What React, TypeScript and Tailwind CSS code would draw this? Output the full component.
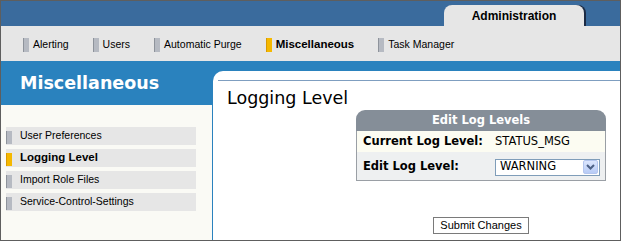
const navItems = [
  { label: "Alerting", active: false },
  { label: "Users", active: false },
  { label: "Automatic Purge", active: false },
  { label: "Miscellaneous", active: true },
  { label: "Task Manager", active: false },
];

const sideItems = [
  { label: "User Preferences", active: false },
  { label: "Logging Level", active: true },
  { label: "Import Role Files", active: false },
  { label: "Service-Control-Settings", active: false },
];

function Marker({ active, className }: { active: boolean; className: string }) {
  return (
    <span
      className={
        active
          ? `${className} w-[6px] shrink-0 bg-[#f5b800] border-l border-[#d99a00]`
          : `${className} w-[6px] shrink-0 bg-[#b6bac2] border-l border-[#8e939b]`
      }
    />
  );
}

export default function App() {
  return (
    <div className="w-[621px] h-[241px] border border-[#5e5e5e] flex flex-col overflow-hidden bg-white font-['Liberation_Sans',Arial,sans-serif]">
      {/* top bar */}
      <div className="h-[25px] bg-[#3a6b9d] flex justify-end items-end pr-[36px]">
        <div className="w-[140px] h-[21px] bg-[#e6e6e6] rounded-t-[8px] shadow-[2px_0_0_#1b2a43] flex items-center justify-center text-[12px] font-bold text-black">
          Administration
        </div>
      </div>

      {/* nav */}
      <div className="h-[35px] bg-[#e6e6e6] flex items-center gap-[24px] pl-[22px] pt-[3px] text-[10.5px] text-black">
        {navItems.map((item) => (
          <div key={item.label} className="flex items-center gap-[4px]">
            <Marker active={item.active} className="h-[14px]" />
            <span className={item.active ? "font-bold text-[11.5px]" : ""}>{item.label}</span>
          </div>
        ))}
      </div>

      {/* main */}
      <div className="flex flex-1">
        <div className="w-[211px] flex flex-col">
          <div className="h-[44px] bg-[#2a82be] flex items-center pl-[19px] text-white font-bold text-[17.5px] font-['DejaVu_Sans',Verdana,sans-serif]">
            Miscellaneous
          </div>
          <div className="flex-1 bg-[#fafaf5] pt-[22px] pl-[5px] flex flex-col gap-[4px]">
            {sideItems.map((item) => (
              <div key={item.label} className="w-[190px] h-[18px] bg-[#e6e6e6] flex items-end text-[10.5px] text-black">
                <Marker active={item.active} className="h-[13px] mb-[1px]" />
                <span className={item.active ? "self-center ml-[8px] font-bold text-[11.5px]" : "self-center ml-[8px]"}>
                  {item.label}
                </span>
              </div>
            ))}
          </div>
        </div>

        <div className="w-[408px] bg-[#2a82be] pt-[10px] pl-[1px] flex">
          <div className="flex-1 bg-white rounded-tl-[10px] flex flex-col">
            <div className="mt-[9px] ml-[5px] h-px bg-[#7f9ec0]" />
            <div className="mt-[7px] ml-[14px] leading-[20px] text-[17.5px] text-black font-['DejaVu_Sans',Verdana,sans-serif]">
              Logging Level
            </div>

            <div className="mt-[2px] ml-[143px] w-[250px] flex flex-col font-['DejaVu_Sans',Verdana,sans-serif] text-[11.5px] text-black">
              <div className="h-[21px] bg-[#858e98] rounded-t-[9px] flex items-center justify-center text-white font-bold">
                Edit Log Levels
              </div>
              <div className="h-[21px] bg-[#fcfcf2] border-x border-[#9a9fa5] flex items-center">
                <span className="w-[138px] pl-[6px] font-bold">Current Log Level:</span>
                <span>STATUS_MSG</span>
              </div>
              <div className="h-[29px] bg-[#eef0f1] border-x border-b border-[#9a9fa5] flex items-center pt-[2px]">
                <span className="w-[138px] pl-[6px] font-bold">Edit Log Level:</span>
                <div className="w-[105px] h-[17px] border border-[#7f9db9] bg-white flex items-center justify-between pl-[4px] pr-px">
                  <span>WARNING</span>
                  <span className="w-[15px] h-[14px] rounded-[2px] bg-gradient-to-b from-[#dce6fd] to-[#b7cbf6] border border-[#b4c6ee] flex items-center justify-center">
                    <svg width="9" height="6" viewBox="0 0 9 6">
                      <path d="M1 1 L4.5 4.5 L8 1" fill="none" stroke="#4d6185" strokeWidth="2" />
                    </svg>
                  </span>
                </div>
              </div>
            </div>

            <div className="mt-[31px] ml-[220px]">
              <button className="w-[96px] h-[17px] border border-[#7a7a7a] bg-white text-[11px] text-black leading-none">
                Submit Changes
              </button>
            </div>
          </div>
        </div>
      </div>
    </div>
  );
}
